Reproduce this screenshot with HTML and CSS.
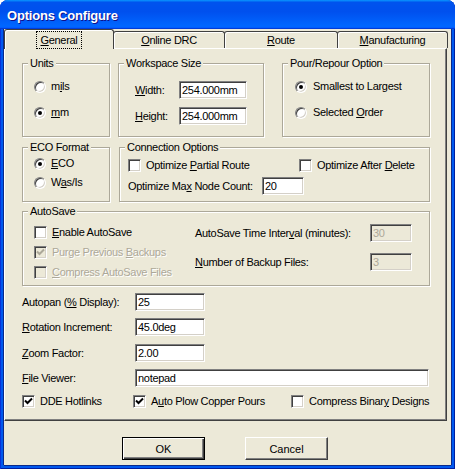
FILE: index.html
```html
<!DOCTYPE html>
<html>
<head>
<meta charset="utf-8">
<link rel="stylesheet" href="styles.css">
</head>
<body>
<div class="window">
  <div class="titlebar"><span class="title">Options Configure</span></div>
  <div class="client">
    <div class="tabs">
      <div class="tab tab-general active"><span class="focus"><u>G</u>eneral</span></div>
      <div class="tab tab-drc"><span><u>O</u>nline DRC</span></div>
      <div class="tab tab-route"><span><u>R</u>oute</span></div>
      <div class="tab tab-mfg"><span><u>M</u>anufacturing</span></div>
    </div>
    <div class="panel">
      <div class="row row1">
        <div class="group g-units">
          <span class="legend">Units</span>
          <div class="opt"><span class="radio"></span><span>m<u>i</u>ls</span></div>
          <div class="opt opt-second"><span class="radio on"></span><span><u>m</u>m</span></div>
        </div>
        <div class="group g-work">
          <span class="legend">Workspace Size</span>
          <div class="frm"><span class="wlabel"><u>W</u>idth:</span><span class="inp w68">254.000mm</span></div>
          <div class="frm frm-second"><span class="wlabel"><u>H</u>eight:</span><span class="inp w68">254.000mm</span></div>
        </div>
        <div class="group g-pour">
          <span class="legend">Pour/Repour Option</span>
          <div class="opt"><span class="radio on wide"></span><span>Smallest to Largest</span></div>
          <div class="opt opt-second"><span class="radio wide"></span><span>Selected <u>O</u>rder</span></div>
        </div>
      </div>
      <div class="row row2">
        <div class="group g-eco">
          <span class="legend">ECO Format</span>
          <div class="opt"><span class="radio on"></span><span><u>E</u>CO</span></div>
          <div class="opt opt-eco2"><span class="radio"></span><span>W<u>a</u>s/Is</span></div>
        </div>
        <div class="group g-conn">
          <span class="legend">Connection Options</span>
          <div class="conn-row">
            <div class="chk c-partial"><span class="cb"></span><span>Optimize <u>P</u>artial Route</span></div>
            <div class="chk"><span class="cb"></span><span>Optimize After <u>D</u>elete</span></div>
          </div>
          <div class="frm conn-max"><span class="mlabel">Optimize Ma<u>x</u> Node Count:</span><span class="inp w42">20</span></div>
        </div>
      </div>
      <div class="row row3">
        <div class="group g-auto">
          <span class="legend">AutoSave</span>
          <div class="auto-left">
            <div class="chk"><span class="cb"></span><span><u>E</u>nable AutoSave</span></div>
            <div class="chk chk-gap dis"><span class="cb cb-dis"><svg width="9" height="9" viewBox="0 0 9 9"><path d="M1 3.5 L3.5 6 L8 1.5" fill="none" stroke="#aca899" stroke-width="2"/></svg></span><span>Purge Previous <u>B</u>ackups</span></div>
            <div class="chk chk-gap dis"><span class="cb cb-dis"></span><span><u>C</u>ompress AutoSave Files</span></div>
          </div>
          <div class="auto-right">
            <div class="frm"><span class="alabel">AutoSave Time Inter<u>v</u>al (minutes):</span><span class="inp inp-dis w42">30</span></div>
            <div class="frm frm-auto2"><span class="alabel"><u>N</u>umber of Backup Files:</span><span class="inp inp-dis w42">3</span></div>
          </div>
        </div>
      </div>
      <div class="fields">
        <div class="frm f1"><span class="flabel">Autopan (<u>%</u> Display):</span><span class="inp w70">25</span></div>
        <div class="frm f2"><span class="flabel"><u>R</u>otation Increment:</span><span class="inp w70">45.0deg</span></div>
        <div class="frm f3"><span class="flabel"><u>Z</u>oom Factor:</span><span class="inp w70">2.00</span></div>
        <div class="frm f4"><span class="flabel"><u>F</u>ile Viewer:</span><span class="inp w294">notepad</span></div>
      </div>
      <div class="chkrow">
        <div class="chk c-dde"><span class="cb"><svg width="9" height="9" viewBox="0 0 9 9"><path d="M1 3.5 L3.5 6 L8 1.5" fill="none" stroke="#000" stroke-width="2"/></svg></span><span>DDE Hotlinks</span></div>
        <div class="chk c-plow"><span class="cb"><svg width="9" height="9" viewBox="0 0 9 9"><path d="M1 3.5 L3.5 6 L8 1.5" fill="none" stroke="#000" stroke-width="2"/></svg></span><span>A<u>u</u>to Plow Copper Pours</span></div>
        <div class="chk"><span class="cb"></span><span>Compress Binar<u>y</u> Designs</span></div>
      </div>
    </div>
    <div class="buttons">
      <div class="btn btn-ok">OK</div>
      <div class="btn btn-cancel">Cancel</div>
    </div>
  </div>
</div>
</body>
</html>
```

FILE: styles.css
```css
html, body {
  margin: 0;
  padding: 0;
  background: #ffffff;
}
body {
  font-family: "Liberation Sans", Arial, sans-serif;
  font-size: 11px;
  letter-spacing: -0.3px;
  color: #000;
}
.window {
  width: 455px;
  height: 469px;
  background: #0058ee;
  border-radius: 8px 8px 0 0;
  display: flex;
  flex-direction: column;
  box-shadow: inset 1px 0 #0831d9, inset -1px 0 #001ea0, inset 0 -1px #001ea0;
}
.titlebar {
  height: 29px;
  flex: none;
  box-sizing: border-box;
  padding: 2px 0 0 7px;
  display: flex;
  align-items: center;
  border-radius: 8px 8px 0 0;
  background: linear-gradient(180deg, #0997ff, #0053ee 8%, #0050ee 40%, #0066ff 88%, #0066ff 93%, #005bff 95%, #003dd7 96%, #003dd7);
}
.title {
  color: #fff;
  font-weight: bold;
  font-size: 13px;
  letter-spacing: -0.2px;
  line-height: 15px;
  text-shadow: 1px 1px #0f1089;
}
.client {
  flex: 1;
  margin: 0 4px 4px 4px;
  background: #ece9d8;
  box-shadow: -1px 0 0 #0a2a8a, 1px 0 0 #0a2a8a, 0 1px 0 #0a2a8a;
}
.tabs {
  display: flex;
  align-items: flex-end;
  height: 19px;
}
.tab {
  box-sizing: border-box;
  height: 17px;
  border: 1px solid #404040;
  border-bottom: none;
  border-radius: 3px 3px 0 0;
  background: #ece9d8;
  box-shadow: inset 1px 1px #fff;
  display: flex;
  align-items: center;
  justify-content: center;
  margin-right: -1px;
  line-height: 13px;
}
.tab.active {
  height: 20px;
  margin-bottom: -1px;
  position: relative;
  z-index: 1;
  padding-top: 1px;
}
.tab-general { width: 110px; }
.tab-drc { width: 112px; }
.tab-route { width: 114px; }
.tab-mfg { width: 111px; }
.focus {
  outline: 1px dotted #000;
  padding: 2px 3px 1px 3px;
}
.panel {
  width: 443px;
  height: 373px;
  box-sizing: border-box;
  border-top: 1px solid #fff;
  border-left: 1px solid #fff;
  border-right: 1px solid #404040;
  border-bottom: 1px solid #404040;
  box-shadow: inset -1px -1px #808080;
  padding: 14px 0 0 17px;
}
.row {
  display: flex;
}
.row1 { height: 74px; }
.row2 { height: 55px; margin-top: 10px; }
.row3 { height: 75px; margin-top: 9px; }
.group {
  position: relative;
  box-sizing: border-box;
  height: 100%;
  border: 1px solid #aca899;
  box-shadow: inset 1px 1px #fff, 1px 1px #fff;
}
.legend {
  position: absolute;
  top: -7px;
  left: 5px;
  padding: 0 2px;
  background: #ece9d8;
  line-height: 13px;
  white-space: nowrap;
}
.g-units { width: 88px; margin-right: 8px; padding: 16px 0 0 11px; }
.g-work { width: 146px; margin-right: 18px; padding: 17px 0 0 16px; }
.g-pour { width: 148px; padding: 16px 0 0 12px; }
.g-eco { width: 88px; margin-right: 9px; padding: 9px 0 0 11px; }
.g-conn { width: 311px; padding: 11px 0 0 8px; }
.g-auto { width: 408px; display: flex; align-items: flex-start; }
.opt {
  display: flex;
  align-items: center;
  height: 13px;
  line-height: 13px;
  white-space: nowrap;
}
.opt-second { margin-top: 13px; }
.opt-eco2 { margin-top: 6px; }
.radio {
  flex: none;
  position: relative;
  width: 12px;
  height: 12px;
  box-sizing: border-box;
  border-radius: 50%;
  background: #fff;
  border: 1px solid;
  border-color: #808080 #fff #fff #808080;
  box-shadow: inset 1px 1px #404040, inset -1px -1px #d4d0c8;
  margin-right: 5px;
}
.radio.wide { margin-right: 6px; }
.radio.on::after {
  content: "";
  position: absolute;
  left: 3px;
  top: 3px;
  width: 4px;
  height: 4px;
  border-radius: 50%;
  background: #000;
}
.frm {
  display: flex;
  align-items: center;
  white-space: nowrap;
  line-height: 13px;
}
.frm-second { margin-top: 8px; }
.wlabel { width: 44px; }
.inp {
  flex: none;
  height: 18px;
  box-sizing: border-box;
  background: #fff;
  border: 1px solid;
  border-color: #808080 #fff #fff #808080;
  box-shadow: inset 1px 1px #404040, inset -1px -1px #d4d0c8;
  padding: 1px 0 0 2px;
  display: flex;
  align-items: center;
  overflow: hidden;
  white-space: nowrap;
}
.inp-dis {
  background: #ece9d8;
  color: #aca899;
}
.w42 { width: 42px; }
.w68 { width: 68px; }
.w70 { width: 70px; }
.w294 { width: 294px; }
.chk {
  display: flex;
  align-items: center;
  height: 13px;
  line-height: 13px;
  white-space: nowrap;
}
.chk.dis {
  color: #aca899;
  text-shadow: 1px 1px #fff;
}
.cb {
  flex: none;
  width: 13px;
  height: 13px;
  box-sizing: border-box;
  background: #fff;
  border: 1px solid;
  border-color: #808080 #fff #fff #808080;
  box-shadow: inset 1px 1px #404040, inset -1px -1px #d4d0c8;
  margin-right: 5px;
  display: flex;
  align-items: center;
  justify-content: center;
}
.cb svg { display: block; }
.cb-dis { background: #ece9d8; }
.conn-row { display: flex; }
.c-partial { width: 171px; }
.conn-max { margin-top: 5px; }
.mlabel { width: 134px; }
.auto-left {
  width: 161px;
  margin: 14px 0 0 11px;
}
.chk-gap { margin-top: 7px; }
.auto-right { margin-top: 12px; }
.alabel { width: 175px; }
.frm-auto2 { margin-top: 11px; }
.fields .f1 { margin-top: 7px; }
.fields .f2 { margin-top: 7px; }
.fields .f3 { margin-top: 8px; }
.fields .f4 { margin-top: 7px; }
.flabel { width: 113px; }
.chkrow {
  display: flex;
  margin-top: 8px;
}
.c-dde { width: 111px; }
.c-plow { width: 158px; }
.buttons {
  display: flex;
  padding-left: 118px;
  margin-top: 16px;
}
.btn {
  width: 83px;
  height: 23px;
  box-sizing: border-box;
  display: flex;
  align-items: center;
  justify-content: center;
  background: #ece9d8;
  letter-spacing: 0;
}
.btn-ok {
  border: 1px solid #000;
  box-shadow: inset 1px 1px #fff, inset -1px -1px #404040, inset -2px -2px #808080;
  margin-right: 40px;
}
.btn-cancel {
  border: 1px solid;
  border-color: #fff #404040 #404040 #fff;
  box-shadow: inset -1px -1px #808080;
}
```
